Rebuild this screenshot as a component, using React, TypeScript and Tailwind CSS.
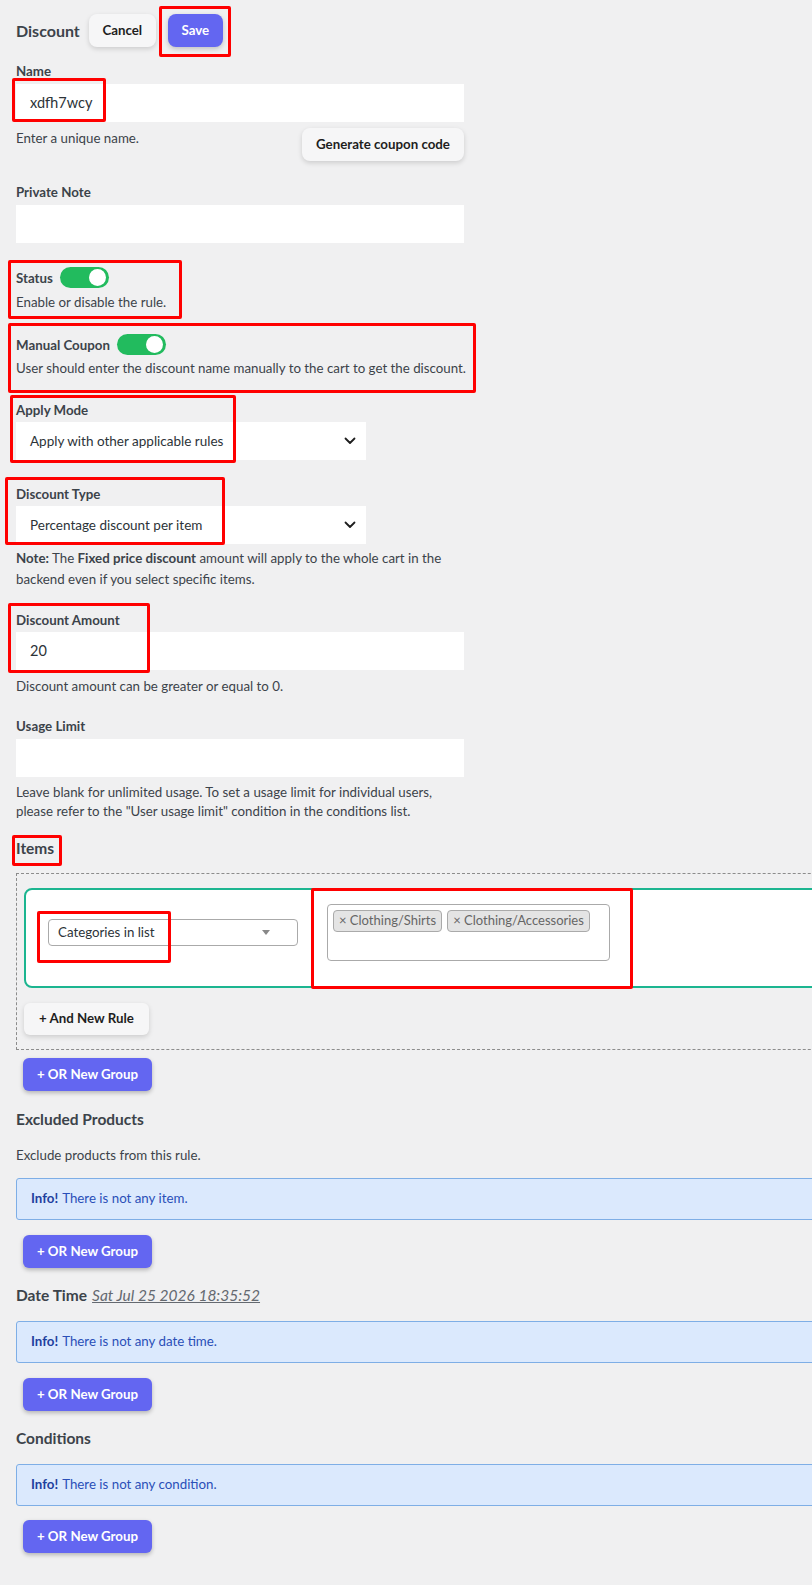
const font = "font-['Lato','Segoe_UI',sans-serif]";

const Mark = ({ className }: { className: string }) => (
  <span className={`pointer-events-none absolute rounded-[2px] border-[3px] border-[#f00] ${className}`} />
);

const Toggle = () => (
  <span className="flex h-[21px] w-[49px] items-center justify-end rounded-full bg-[#22bb5e] pr-[3px]">
    <span className="h-[17px] w-[17px] rounded-full bg-white" />
  </span>
);

const Chevron = () => (
  <svg width="12" height="8" viewBox="0 0 12 8" fill="none">
    <path d="M1.5 1.5 6 6l4.5-4.5" stroke="#1e1e1e" strokeWidth="1.8" strokeLinecap="round" strokeLinejoin="round" />
  </svg>
);

const Label = ({ children }: { children: React.ReactNode }) => (
  <div className="text-[13.3px] font-bold leading-5 text-[#3c434a]">{children}</div>
);

const Help = ({ children }: { children: React.ReactNode }) => (
  <p className="text-[13.3px] leading-5 text-[#3c434a]">{children}</p>
);

const SelectBox = ({ value }: { value: string }) => (
  <div className="mt-[2px] flex h-[38px] w-[350px] items-center justify-between bg-white pl-[14px] pr-[10px] text-[13.5px] text-[#2c3338]">
    <span>{value}</span>
    <Chevron />
  </div>
);

const OrGroupButton = () => (
  <button className="flex h-[33px] w-[129px] items-center justify-center rounded-md bg-[#6366f1] text-[13.3px] font-bold text-white shadow-[0_2px_4px_rgba(0,0,0,0.25)]">
    + OR New Group
  </button>
);

const InfoBox = ({ text }: { text: string }) => (
  <div className="flex h-[42px] w-[900px] items-center rounded-[3px] border border-[#7eaee6] bg-[#dbe9fd] pl-[14px] text-[13.3px] text-[#2a4fb8]">
    <b className="mr-1 font-bold text-[#1f3f9e]">Info!</b>
    {text}
  </div>
);

const Heading = ({ children }: { children: React.ReactNode }) => (
  <h2 className="text-[15.5px] font-bold leading-[22px] text-[#3c434a]">{children}</h2>
);

export default function App() {
  return (
    <div className={`min-h-[1585px] w-full overflow-hidden bg-[#f0f0f1] px-4 pt-[14px] ${font}`}>
      {/* header */}
      <div className="flex h-[33px] items-center">
        <h1 className="text-[16px] font-bold text-[#3c434a]">Discount</h1>
        <button className="ml-[9px] h-[33px] w-[67px] rounded-lg bg-[#f6f6f7] text-[13.3px] font-bold text-[#1e1e1e] shadow-[0_2px_5px_rgba(0,0,0,0.15)]">
          Cancel
        </button>
        <div className="relative ml-3">
          <button className="h-[33px] w-[55px] rounded-lg bg-[#6366f1] text-[13.3px] font-bold text-white shadow-[0_2px_5px_rgba(0,0,0,0.2)]">
            Save
          </button>
          <Mark className="-bottom-[10px] -left-[9px] -right-[8px] -top-[8px]" />
        </div>
      </div>

      <div className="w-[448px]">
        {/* name */}
        <div className="mt-[14px]">
          <Label>Name</Label>
          <div className="relative mt-[3px] flex h-[38px] items-center bg-white pl-[14px] text-[14.5px] text-[#2c3338]">
            xdfh7wcy
            <Mark className="-left-1 -top-[6px] bottom-0 w-[94px]" />
          </div>
          <div className="mt-[6px] flex items-start justify-between">
            <Help>Enter a unique name.</Help>
            <button className="h-[33px] w-[162px] rounded-lg bg-[#f6f6f7] text-[13.3px] font-bold text-[#1e1e1e] shadow-[0_2px_5px_rgba(0,0,0,0.15)]">
              Generate coupon code
            </button>
          </div>
        </div>

        {/* private note */}
        <div className="mt-[21px]">
          <Label>Private Note</Label>
          <div className="mt-[3px] h-[38px] bg-white" />
        </div>

        {/* status */}
        <div className="relative mt-6">
          <div className="flex h-[21px] items-center gap-[7px]">
            <Label>Status</Label>
            <Toggle />
          </div>
          <div className="mt-1">
            <Help>Enable or disable the rule.</Help>
          </div>
          <Mark className="-bottom-[7px] -left-2 -top-[7px] w-[174px]" />
        </div>

        {/* manual coupon */}
        <div className="relative mt-[22px]">
          <div className="flex h-[21px] items-center gap-[7px]">
            <Label>Manual Coupon</Label>
            <Toggle />
          </div>
          <div className="mt-[3px] whitespace-nowrap">
            <Help>User should enter the discount name manually to the cart to get the discount.</Help>
          </div>
          <Mark className="-bottom-[15px] -left-2 -top-[11px] w-[468px]" />
        </div>

        {/* apply mode */}
        <div className="relative mt-[22px]">
          <Label>Apply Mode</Label>
          <SelectBox value="Apply with other applicable rules" />
          <Mark className="-bottom-[3px] -left-[6px] -top-[5px] w-[226px]" />
        </div>

        {/* discount type */}
        <div className="relative mt-6">
          <Label>Discount Type</Label>
          <SelectBox value="Percentage discount per item" />
          <Mark className="-bottom-px -left-[11px] -top-[7px] w-[220px]" />
        </div>
        <p className="mt-1 w-[440px] text-[13.3px] leading-[21px] text-[#3c434a]">
          <b className="font-bold">Note:</b> The <b className="font-bold">Fixed price discount</b> amount will apply
          to the whole cart in the backend even if you select specific items.
        </p>

        {/* discount amount */}
        <div className="relative mt-5">
          <Label>Discount Amount</Label>
          <div className="mt-[2px] flex h-[38px] items-center bg-white pl-[14px] text-[14.5px] text-[#2c3338]">20</div>
          <Mark className="-bottom-[3px] -left-2 -top-[7px] w-[142px]" />
        </div>
        <div className="mt-[6px]">
          <Help>Discount amount can be greater or equal to 0.</Help>
        </div>

        {/* usage limit */}
        <div className="mt-5">
          <Label>Usage Limit</Label>
          <div className="mt-[3px] h-[38px] bg-white" />
        </div>
        <p className="mt-[6px] w-[446px] text-[13.3px] leading-[19px] text-[#3c434a]">
          Leave blank for unlimited usage. To set a usage limit for individual users, please refer to the "User usage
          limit" condition in the conditions list.
        </p>

        {/* items */}
        <div className="relative mt-4 w-fit">
          <Heading>Items</Heading>
          <Mark className="-bottom-[7px] -left-1 -top-[2px] w-[50px]" />
        </div>
      </div>

      <div className="mt-[14px] w-[900px] border border-dashed border-[#8c8c8c] pb-[14px] pl-[7px] pt-[14px]">
        <div className="flex h-[100px] items-start rounded-l-lg border-2 border-[#1cb590] bg-white pl-[22px] pt-[14px]">
          <div className="relative mt-[15px]">
            <div className="flex h-[27px] w-[250px] items-center justify-between rounded border border-[#aaa] pl-[9px] pr-[27px] text-[13.3px] text-[#2c3338]">
              <span>Categories in list</span>
              <span className="border-x-[4px] border-t-[5px] border-x-transparent border-t-[#888]" />
            </div>
            <Mark className="-bottom-[17px] -left-[11px] -top-[8px] w-[134px]" />
          </div>
          <div className="relative ml-[29px]">
            <div className="flex h-[57px] w-[283px] items-start gap-[5px] rounded border border-[#aaa] pl-[5px] pt-[5px]">
              <span className="flex h-[22px] items-center rounded border border-[#aaa] bg-[#e4e4e4] px-[5px] text-[13px] text-[#666]">
                × Clothing/Shirts
              </span>
              <span className="flex h-[22px] items-center rounded border border-[#aaa] bg-[#e4e4e4] px-[5px] text-[13px] text-[#666]">
                × Clothing/Accessories
              </span>
            </div>
            <Mark className="-bottom-[28px] -left-4 -right-[23px] -top-4" />
          </div>
        </div>
        <button className="mt-[15px] h-8 w-[125px] rounded-md bg-[#f6f6f7] text-[13.3px] font-bold text-[#1e1e1e] shadow-[0_2px_5px_rgba(0,0,0,0.15)]">
          + And New Rule
        </button>
      </div>
      <div className="ml-[7px] mt-2">
        <OrGroupButton />
      </div>

      {/* excluded products */}
      <div className="mt-[17px]">
        <Heading>Excluded Products</Heading>
      </div>
      <div className="mt-[15px]">
        <Help>Exclude products from this rule.</Help>
      </div>
      <div className="mt-[13px]">
        <InfoBox text="There is not any item." />
      </div>
      <div className="ml-[7px] mt-[15px]">
        <OrGroupButton />
      </div>

      {/* date time */}
      <div className="mt-4 flex items-baseline gap-[5px]">
        <Heading>Date Time</Heading>
        <span className="text-[15.5px] italic text-[#646970] underline">Sat Jul 25 2026 18:35:52</span>
      </div>
      <div className="mt-[14px]">
        <InfoBox text="There is not any date time." />
      </div>
      <div className="ml-[7px] mt-[15px]">
        <OrGroupButton />
      </div>

      {/* conditions */}
      <div className="mt-4">
        <Heading>Conditions</Heading>
      </div>
      <div className="mt-[15px]">
        <InfoBox text="There is not any condition." />
      </div>
      <div className="ml-[7px] mt-[14px]">
        <OrGroupButton />
      </div>
    </div>
  );
}
